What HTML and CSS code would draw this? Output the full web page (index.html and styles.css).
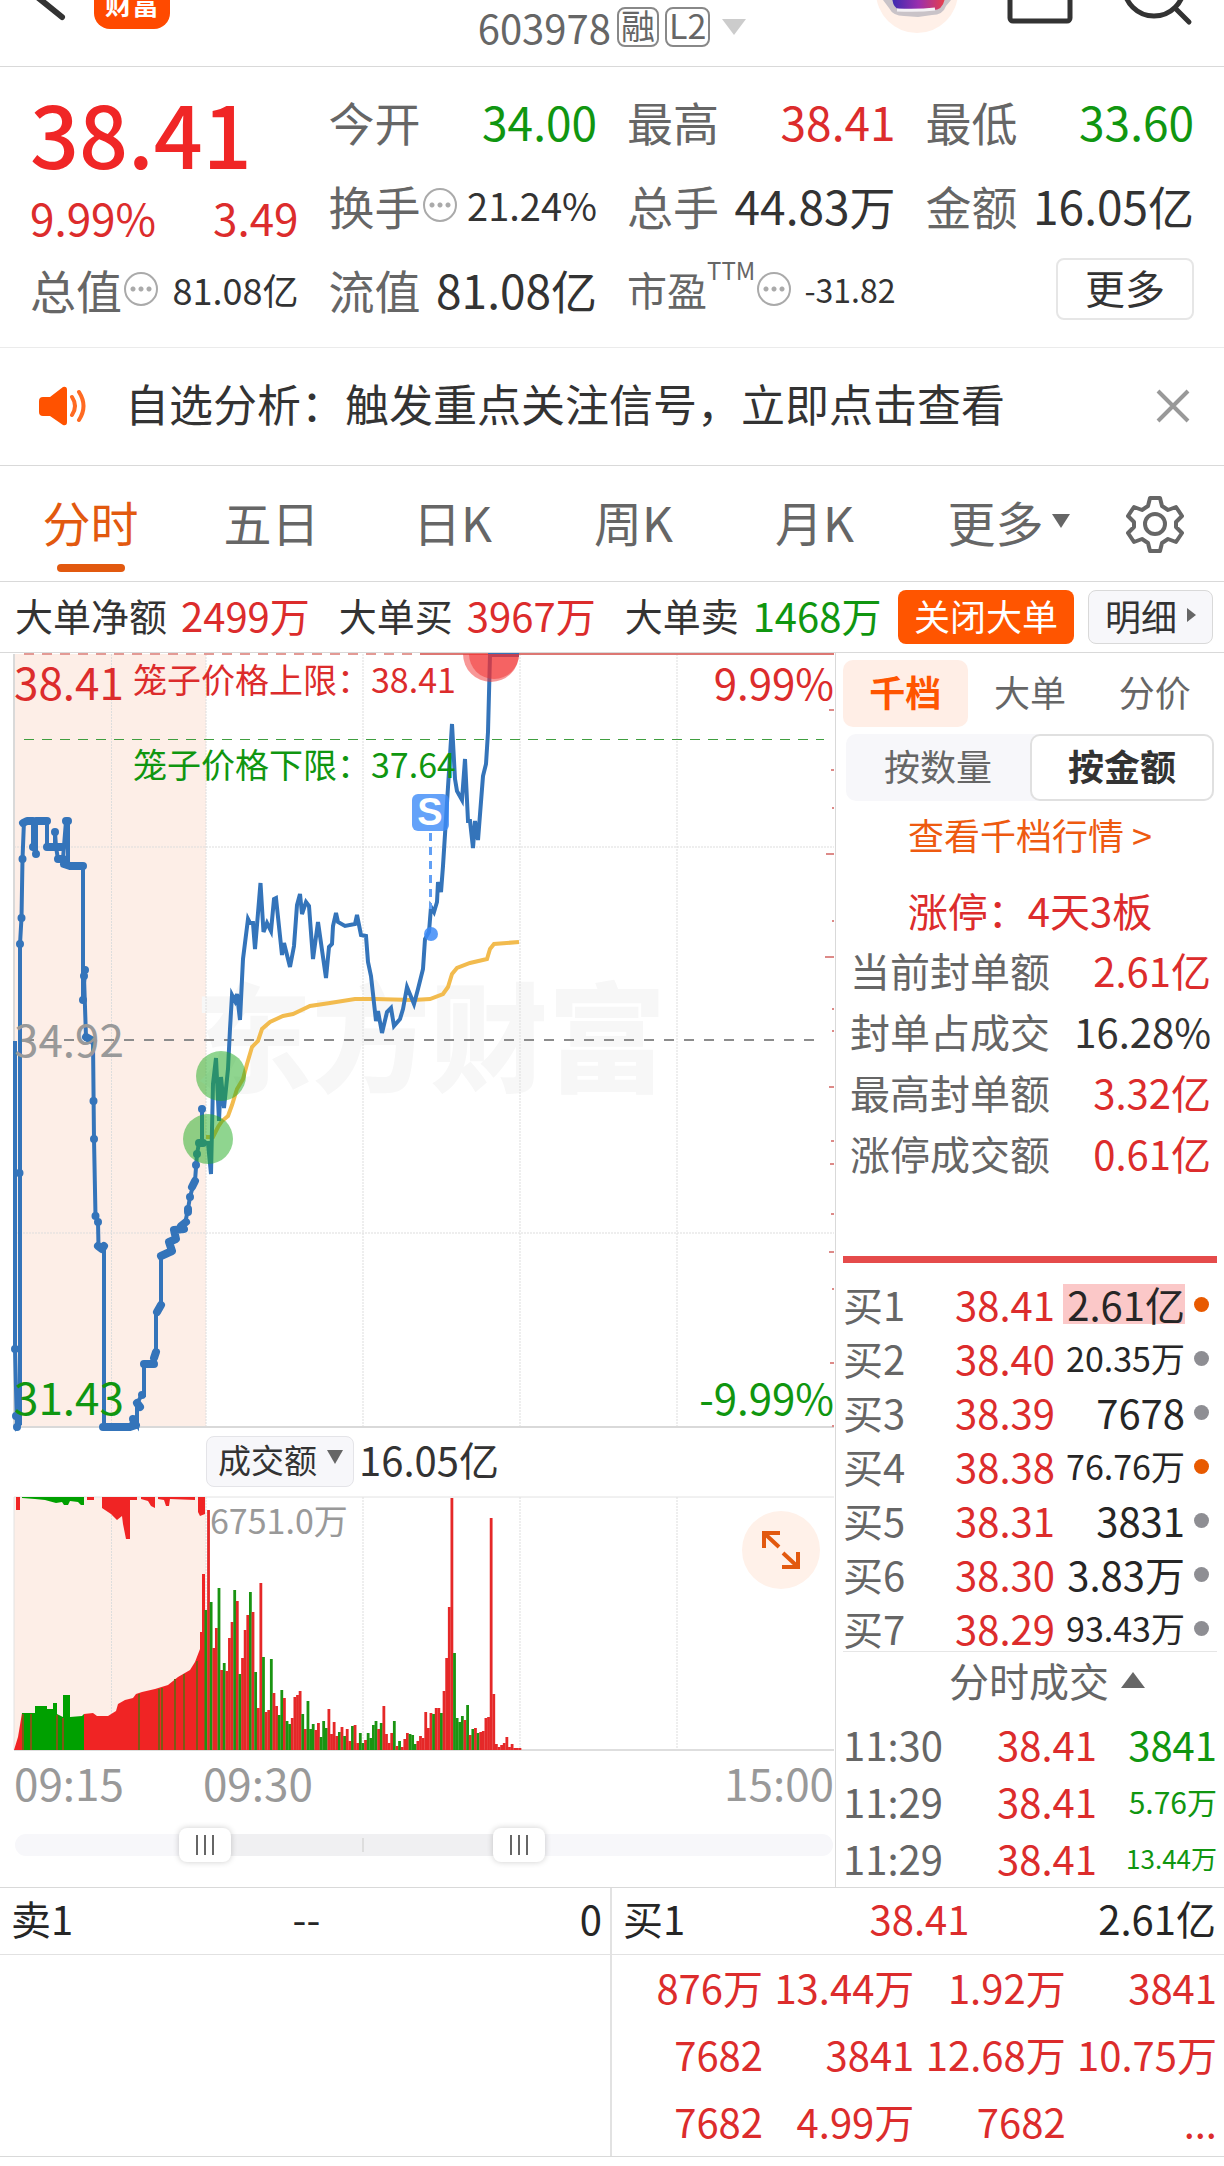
FILE: index.html
```html
<!DOCTYPE html>
<html lang="zh-CN">

<head>
    <meta charset="UTF-8">
    <meta name="viewport" content="width=device-width, initial-scale=1.0">
    <title>603978 分时</title>
    <link rel="stylesheet" href="styles.css">
</head>

<body>
    <header class="top-bar">
        <div class="top-left">
            <button class="icon-button" aria-label="返回">
                <svg width="74" height="67" viewBox="0 0 74 67"><path d="M36 -4L62 17" fill="none" stroke="#333" stroke-width="6" stroke-linecap="round"/></svg>
            </button>
            <span class="brand">财富</span>
        </div>
        <div class="stock-code">
            <span>603978</span>
            <span class="tag">融</span>
            <span class="tag">L2</span>
            <span class="caret-down caret-light"></span>
        </div>
        <div class="top-right">
            <button class="icon-button" aria-label="智能助手">
                <svg width="90" height="67" viewBox="0 0 90 67">
                    <defs>
                        <linearGradient id="screen" x1="0" x2="1"><stop offset="0" stop-color="#3a2bb0"/><stop offset=".5" stop-color="#9a2fae"/><stop offset="1" stop-color="#e8404a"/></linearGradient>
                    </defs>
                    <circle cx="44" cy="-8" r="41" fill="#fff0e8"/>
                    <path d="M10 0h68l-5 6q-3 9-14 9l-14 2-14-1q-11 0-15-8z" fill="#c9c3c8"/>
                    <path d="M19 -6h53q0 16-12 16l-34-1q-7-1-7-15z" fill="url(#screen)"/>
                    <path d="M24 10q22 1 38-1" fill="none" stroke="#f4f1f4" stroke-width="3"/>
                </svg>
            </button>
            <button class="icon-button" aria-label="分享">
                <svg width="90" height="67" viewBox="0 0 90 67"><rect x="17" y="-30" width="60" height="51" rx="3" fill="none" stroke="#333" stroke-width="5"/></svg>
            </button>
            <button class="icon-button" aria-label="搜索">
                <svg width="111" height="67" viewBox="0 0 111 67"><circle cx="41" cy="-14" r="30" fill="none" stroke="#333" stroke-width="5"/><path d="M62 8L76 22" stroke="#333" stroke-width="5" stroke-linecap="round"/></svg>
            </button>
        </div>
    </header>

    <section class="stats">
        <div class="quote">
            <div class="quote-price">38.41</div>
            <div class="quote-change"><span>9.99%</span><span>3.49</span></div>
        </div>
        <div class="stat"><span class="label">今开</span><span class="value green">34.00</span></div>
        <div class="stat"><span class="label">最高</span><span class="value red">38.41</span></div>
        <div class="stat"><span class="label">最低</span><span class="value green">33.60</span></div>
        <div class="stat"><span class="label">换手</span><i class="hint"></i><span class="value medium">21.24%</span></div>
        <div class="stat"><span class="label">总手</span><span class="value">44.83万</span></div>
        <div class="stat"><span class="label">金额</span><span class="value">16.05亿</span></div>
        <div class="stat"><span class="label">总值</span><i class="hint"></i><span class="value small">81.08亿</span></div>
        <div class="stat"><span class="label">流值</span><span class="value">81.08亿</span></div>
        <div class="stat"><span class="label compact">市盈<sup>TTM</sup></span><i class="hint"></i><span class="value tiny">-31.82</span></div>
        <div class="stat"><button class="more-button">更多</button></div>
    </section>

    <section class="notice">
        <svg width="50" height="40" viewBox="0 0 50 40">
            <path d="M4 11h7L24 1q4-1 4 3v32q0 4-4 3L11 30H4q-4 0-4-4V15q0-4 4-4z" fill="#ff5200"/>
            <path d="M33 11q6 9 0 18M40 6q9 14 0 28" fill="none" stroke="#ff6a22" stroke-width="4" stroke-linecap="round"/>
        </svg>
        <p>自选分析：触发重点关注信号，立即点击查看</p>
        <button class="icon-button" aria-label="关闭">
            <svg width="34" height="34" viewBox="0 0 34 34"><path d="M2 2L32 32M32 2L2 32" stroke="#999" stroke-width="4"/></svg>
        </button>
    </section>

    <nav class="tabs">
        <a href="#" class="active">分时</a>
        <a href="#">五日</a>
        <a href="#">日K</a>
        <a href="#">周K</a>
        <a href="#">月K</a>
        <a href="#">更多<span class="caret-down caret-small"></span></a>
        <button class="icon-button" aria-label="设置">
            <svg width="58" height="58" viewBox="0 0 58 58" fill="none" stroke="#666" stroke-width="4" stroke-linejoin="round">
                <path d="M24 3h10l2 8 6 4 8-3 6 9-6 6v5l6 6-6 9-8-3-6 4-2 8H24l-2-8-6-4-8 3-6-9 6-6v-5l-6-6 6-9 8 3 6-4z"/>
                <circle cx="29" cy="29" r="10"/>
            </svg>
        </button>
    </nav>

    <section class="big-orders">
        <span class="order-item">大单净额<b class="red">2499万</b></span>
        <span class="order-item">大单买<b class="red">3967万</b></span>
        <span class="order-item">大单卖<b class="green">1468万</b></span>
        <button class="close-orders">关闭大单</button>
        <button class="detail-button">明细<span class="caret-right"></span></button>
    </section>

    <main class="board">
        <div class="charts">
            <svg class="chart" viewBox="0 654 835 783">
                <rect x="14" y="655" width="192" height="773" fill="#fdeee7"/>
                <text x="194" y="1084" class="watermark">东方财富</text>
                <g class="grid">
                    <path d="M111.5 655V1428M206 655V1428M363 655V1428M520 655V1428M677 655V1428M14 848H834M14 1234H834"/>
                </g>
                <path d="M14 655V1428M14 1428H834" stroke="#d9d9d9" stroke-width="2"/>
                <path d="M24 655H834" stroke="#e39a95" stroke-width="2" stroke-dasharray="10 8"/>
                <path d="M420 655H834" stroke="#dd7773" stroke-width="2"/>
                <path d="M24 740.5H824" stroke="#3f9e3f" stroke-width="1" stroke-dasharray="10 8"/>
                <path d="M24 1041H824" stroke="#8c8c8c" stroke-width="2" stroke-dasharray="10 10"/>
                <path d="M829 711h5M831 771h3M832 809h2M826 855h8M832 922h2M825 958h9M832 1010h2M832 1032h2M829 1088h5M831 1142h3M830 1165h4M831 1215h3M829 1253h5M832 1290h2M830 1364h4M832 1427h2" stroke="#dd8a88" stroke-width="2"/>
                <path class="average" d="M206 1138L213 1138 218 1128 222 1122 228 1117 232 1106 237 1090 243 1080 247 1065 252 1048 258 1042 262 1030 270 1023 283 1017 293 1015 310 1007 330 1004 355 1000 375 1000 413 1001 430 1000 443 995 448 988 452 975 457 969 470 964 487 960 490 950 494 945 519 943"/>
                <path class="price" d="M15 1042V1350L17 1428 20 1425V945L21.500 919 22.500 860 24 822H33V848L36 855V822H47V848H55V833L56 848 58 860H63L66 822H68V866H83V1002L85 971 84 978 86 1038 93 1042 94 1140 95.500 1217 98 1223 98.500 1247H104V1428H130L133 1420 137 1426V1404L142 1396H144V1365H154L156 1353V1312L161 1306V1257L172 1250 169 1243 175 1241 174 1231 184 1230 188 1210 190 1198 193 1187 195 1182 197 1155 199 1144H202V1110V1144H208L211 1175 213 1085 216 1059 219 1122 221 1078 224 1109 228 1070 230 1030 232 996 235 1002 237 995 240 1021 243 960 248 920 250 924H253L255 950 260.500 884 263.500 933 267 924 271 932 274 900 276 899 282 956 284 944 290 968 294 947 297 906 300 895 302 915 306 903 309 907 313 960 318 923 326 979 329 948 332 945 333 927 336 914 338 923 345 927 355 925 357 916 361 936 366 937 368 963 371 977 376 1022 378 1012 382 1034 387 1013 391 1009 394 1027 400 1020 403 1010 407 988 414 1005 418 990 423 970 425 940 429 933 431 908 434 913 437 903 438 883 441 893 443 867 452 725 455 780 457 792 462 801 465 760 468 822H470L473 849 475 822 478 841 483 777 486 765 488 733 490 656H519"/>
                <!-- call auction ticks -->
                <path class="ticks" d="M15 1350V1350M16 1417V1417M17 1428V1428M19.500 1174V1174M20 945V945M21.500 919V919M22.500 860V860M23 824L27 822H33M33 848V848M36 855V855M36 822H47M47 848H62M55 833V833M58 860H63M66 822H68M64 865L70 867H83M85 971V971M84 977V977M83 1001V1001M86 1038L93 1042M93.500 1102V1102M94 1140V1140M95.500 1217V1217M98 1223V1223M98 1247L102 1250 104 1247M103 1428H130L136 1426M133 1420V1420M137 1404L140 1408M142 1396V1396M144 1365H154M154 1359L156 1353M157 1313L161 1306M161 1257L172 1252 169 1243 176 1240 174 1231 184 1230 181 1227 186 1223M188 1213V1210M190 1198V1198M192 1188L195 1182M196 1166V1166M197 1155V1155M199 1144H203M202 1110V1110"/>
                <circle cx="221" cy="1077" r="25" fill="#1fac1f" fill-opacity=".5"/>
                <circle cx="208" cy="1140" r="25" fill="#1fac1f" fill-opacity=".5"/>
                <path d="M463 655a28 28 0 0 0 56 0z" fill="#f23030" fill-opacity=".5"/>
                <path d="M469 655a25 25 0 0 0 50 0z" fill="#f23030" fill-opacity=".5"/>
                <path d="M430.500 834V910" stroke="#62a0f5" stroke-width="3" stroke-dasharray="8 6"/>
                <circle cx="431" cy="935" r="7" fill="#3d8bf7" fill-opacity=".85"/>
                <rect x="412" y="795" width="37" height="37" rx="6" fill="#3d8bf7" fill-opacity=".8"/>
                <text x="430" y="826" class="badge-text" text-anchor="middle">S</text>
                <g class="price-label">
                    <text x="14" y="701" class="fill-red">38.41</text>
                    <text x="14" y="1058" class="fill-gray">34.92</text>
                    <text x="14" y="1416" class="fill-green">31.43</text>
                </g>
                <g class="percent-label">
                    <text x="834" y="701" class="fill-red" text-anchor="end">9.99%</text>
                    <text x="834" y="1416" class="fill-green" text-anchor="end">-9.99%</text>
                </g>
                <g class="limit-label">
                    <text x="133" y="694" class="fill-red">笼子价格上限：38.41</text>
                    <text x="133" y="779" class="fill-green">笼子价格下限：37.64</text>
                </g>
            </svg>

            <div class="volume-bar">
                <button class="volume-select">成交额<span class="caret-down caret-dark"></span></button>
                <span>16.05亿</span>
            </div>

            <div class="volume">
                <svg class="chart" viewBox="0 1488 835 268">
                    <rect x="14" y="1498" width="192" height="253" fill="#fdeee7"/>
                    <g class="grid"><path d="M111.500 1498V1751M206 1498V1751M363 1498V1751M520 1498V1751M677 1498V1751"/></g>
                    <path d="M14 1498V1751M14 1498H834" stroke="#e2e2e2"/>
                    <path d="M14 1751H834" stroke="#dedede" stroke-width="2"/>
                    <path fill="#f02424" d="M14 1751L18 1738 22 1714V1751zM84 1751V1715L93 1714 97 1717H108L116 1712 118 1705 125 1701 133 1699 136 1695 142 1693 155 1690 168 1686 178 1678 190 1671 195 1663 200 1650V1633H202V1575H205V1751z"/>
                    <path fill="#00a000" d="M22 1751V1714H35V1707H47V1710H53V1704H57V1715L63 1718V1696H70V1718L82 1717 84 1715V1751z"/>
                    <path fill="#f02424" d="M16 1498H20V1511H16zM87 1498H94V1501H87zM102 1498H130V1540H126L123 1525 122 1517 117 1521 111 1515 102 1509zM130 1498H137V1501H130zM141 1498H155V1509L151 1507 148 1502 141 1500zM158 1498H195V1501L170 1500 169 1507H166L164 1501 158 1500zM198 1498H205V1515L200 1517 198 1513z"/>
                    <path fill="#00a000" d="M22 1498H84V1506H81L78 1503 70 1502 68 1506H64L62 1503 56 1504 45 1501 35 1500 22 1499z"/>
                    <path stroke="#7d5a14" stroke-width="2" d="M23 1751V1715M31 1751V1715M57 1751V1716M63 1751V1719M139 1751V1695M159 1751V1690M162 1751V1689M175 1751V1680M184 1751V1675M197 1751V1662"/>
                    <g id="bars"></g>
                    <text x="210" y="1535" class="limit-label fill-gray">6751.0万</text>
                </svg>
                <button class="expand" aria-label="展开">
                    <svg width="40" height="40" viewBox="0 0 40 40" fill="none" stroke="#e2590f" stroke-width="4"><path d="M3 18V3H19M3 3L18 17M37 22V37H21M37 37L22 23"/></svg>
                </button>
            </div>

            <div class="time-axis"><span>09:15</span><span class="open-time">09:30</span><span>15:00</span></div>

            <div class="range">
                <span class="range-active"></span>
                <input type="range" min="0" max="1000" value="214" aria-label="开始时间">
                <input type="range" min="0" max="1000" value="624" aria-label="结束时间">
            </div>
        </div>

        <aside class="panel">
            <div class="panel-tabs">
                <button class="active">千档</button>
                <button>大单</button>
                <button>分价</button>
            </div>
            <div class="segment">
                <button>按数量</button>
                <button class="active">按金额</button>
            </div>
            <a href="#" class="depth-link">查看千档行情 &gt;</a>

            <p class="limit-title">涨停：4天3板</p>
            <dl class="limit-info">
                <div><dt>当前封单额</dt><dd class="red">2.61亿</dd></div>
                <div><dt>封单占成交</dt><dd>16.28%</dd></div>
                <div><dt>最高封单额</dt><dd class="red">3.32亿</dd></div>
                <div><dt>涨停成交额</dt><dd class="red">0.61亿</dd></div>
            </dl>

            <table class="bids">
                <tr><th>买1</th><td class="red">38.41</td><td><span class="highlight">2.61亿</span></td><td><i class="dot hot"></i></td></tr>
                <tr><th>买2</th><td class="red">38.40</td><td class="long">20.35万</td><td><i class="dot"></i></td></tr>
                <tr><th>买3</th><td class="red">38.39</td><td>7678</td><td><i class="dot"></i></td></tr>
                <tr><th>买4</th><td class="red">38.38</td><td class="long">76.76万</td><td><i class="dot hot"></i></td></tr>
                <tr><th>买5</th><td class="red">38.31</td><td>3831</td><td><i class="dot"></i></td></tr>
                <tr><th>买6</th><td class="red">38.30</td><td>3.83万</td><td><i class="dot"></i></td></tr>
                <tr><th>买7</th><td class="red">38.29</td><td class="long">93.43万</td><td><i class="dot"></i></td></tr>
            </table>

            <button class="deals-toggle">分时成交<span class="caret-up"></span></button>
            <table class="deals">
                <tr><th>11:30</th><td class="red">38.41</td><td class="green">3841</td></tr>
                <tr><th>11:29</th><td class="red">38.41</td><td class="green mid">5.76万</td></tr>
                <tr><th>11:29</th><td class="red">38.41</td><td class="green low">13.44万</td></tr>
            </table>
        </aside>
    </main>

    <section class="queues">
        <div class="queue">
            <div class="queue-head"><span>卖1</span><span>--</span><span>0</span></div>
        </div>
        <div class="queue">
            <div class="queue-head"><span>买1</span><span class="red">38.41</span><span>2.61亿</span></div>
            <table class="queue-orders">
                <tr><td>876万</td><td>13.44万</td><td>1.92万</td><td>3841</td></tr>
                <tr><td>7682</td><td>3841</td><td>12.68万</td><td>10.75万</td></tr>
                <tr><td>7682</td><td>4.99万</td><td>7682</td><td>...</td></tr>
            </table>
        </div>
    </section>

    <script>
        // Minute turnover from 09:30: r = up, g = down, number = bar height
        const turnover = 'g140 r240 g148 r102 r122 g162 r80 g87 r79 r112 r128 g160 r149 g76 r92 r120 r135 g158 r138 g78 r42 r167 g93 r38 r40 g91 r57 r44 g35 g60 r52 g29 g26 r32 r53 r55 r59 g36 r21 g49 g21 g26 r20 r27 g13 g29 g22 r41 r16 r28 r14 g18 r23 g14 r21 r9 g24 r25 r7 g17 g7 r10 g17 g12 g25 g29 r21 g27 r44 r16 r7 r17 g29 r4 g9 r3 r11 r17 g16 g15 g6 r9 r14 r12 r38 r22 r37 g36 r42 r42 g37 r59 r92 r143 r252 g97 g32 g28 g34 r30 g45 r15 g21 r22 g17 r18 r19 r32 r33 r232 r56 r6 r3 r5 r7 r13 r3 r6 r2 r2 r2';
        const bars = document.getElementById('bars');

        turnover.split(' ').forEach((item, i) => {
            const bar = document.createElementNS('http://www.w3.org/2000/svg', 'rect');
            const height = Number(item.slice(1));
            bar.setAttribute('x', 204.5 + i * 2.617);
            bar.setAttribute('y', 1751 - height);
            bar.setAttribute('width', 2.8);
            bar.setAttribute('height', height);
            bar.setAttribute('class', item[0] === 'r' ? 'bar-up' : 'bar-down');
            bars.appendChild(bar);
        });
    </script>
</body>

</html>
```
FILE: styles.css
```css
:root {
    --red: #dc2c2c;
    --green: #109610;
    --orange: #ff5500;
    --text: #333;
    --muted: #666;
    --line: #d9d9d9;
    --soft: #f7f7fa;
}

* {
    margin: 0;
    padding: 0;
    box-sizing: border-box;
}

body {
    background-color: #fff;
    color: var(--text);
    font-family: "Noto Sans CJK SC", sans-serif;
    font-size: 40px;
    line-height: 1;
}

button {
    padding-bottom: 5px;
    border: none;
    background: none;
    color: inherit;
    font: inherit;
    cursor: pointer;
}

.icon-button {
    padding: 0;
}

a {
    color: inherit;
    text-decoration: none;
}

b,
th,
i {
    font-weight: normal;
    font-style: normal;
}

table {
    width: 100%;
    border-collapse: collapse;
    table-layout: fixed;
}

svg {
    display: block;
}

.red {
    color: var(--red);
}

.green {
    color: var(--green);
}

/* triangles */
.caret-down,
.caret-up,
.caret-right {
    display: inline-block;
    border: 12px solid transparent;
}

.caret-down {
    border-top: 16px solid var(--muted);
    border-bottom: none;
}

.caret-up {
    border-bottom: 16px solid var(--muted);
    border-top: none;
    margin-left: 12px;
}

.caret-light {
    border-top-color: #ccc;
    margin-left: 6px;
}

.caret-small {
    border-width: 14px 9px 0;
    margin-left: 8px;
}

.caret-dark {
    border-width: 14px 8px 0;
}

.caret-right {
    border-width: 7px 0 7px 9px;
    border-left-color: var(--muted);
}

/* header */
.top-bar {
    display: grid;
    grid-template-columns: 1fr auto 1fr;
    height: 67px;
    overflow: hidden;
    border-bottom: 1px solid var(--line);
}

.top-left,
.top-right {
    display: flex;
    align-items: flex-start;
}

.top-left {
    gap: 20px;
}

.top-right {
    justify-content: flex-end;
}

.top-right .icon-button {
    flex: none;
    margin-left: 30px;
}

.top-right .icon-button:first-child {
    margin-left: 0;
}

.brand {
    width: 76px;
    height: 76px;
    margin-top: -47px;
    padding-top: 37px;
    border-radius: 16px;
    background-color: #ff4a00;
    color: #fff;
    font-size: 27px;
    font-weight: bold;
    text-align: center;
}

.stock-code {
    display: flex;
    align-items: center;
    gap: 6px;
    height: 58px;
    padding-bottom: 4px;
    color: var(--muted);
}

.tag {
    height: 40px;
    padding: 0 2px;
    border: 2px solid #888;
    border-radius: 8px;
    font-size: 34px;
    line-height: 32px;
}

/* key figures */
.stats {
    display: grid;
    grid-template-columns: repeat(4, 1fr);
    grid-auto-rows: 84px;
    column-gap: 30px;
    padding: 12px 30px 16px;
    border-bottom: 1px solid #ebebeb;
}

.quote {
    grid-row: span 2;
    padding-top: 9px;
    color: var(--red);
}

.quote-price {
    color: #f02626;
    font-size: 86px;
    font-weight: 500;
    line-height: 88px;
}

.quote-change {
    display: flex;
    justify-content: space-between;
    margin-top: 11px;
    font-size: 44px;
    line-height: 60px;
}

.stat {
    display: flex;
    align-items: center;
    font-size: 46px;
    white-space: nowrap;
}

.stat .label {
    color: var(--muted);
}

.stat .value {
    margin-left: auto;
}

.stat .medium {
    font-size: 38px;
}

.stat .small {
    font-size: 36px;
}

.stat .tiny {
    font-size: 32px;
}

.stat .compact {
    font-size: 40px;
}

sup {
    font-size: 24px;
    vertical-align: 26px;
    line-height: 0;
}

.hint {
    width: 34px;
    height: 34px;
    margin-left: 2px;
    border: 2px solid #aaa;
    border-radius: 50%;
    background: radial-gradient(circle, #aaa 2px, transparent 3px) center / 8px 8px no-repeat,
        radial-gradient(circle, #aaa 2px, transparent 3px) 3px 11px / 8px 8px no-repeat,
        radial-gradient(circle, #aaa 2px, transparent 3px) 19px 11px / 8px 8px no-repeat;
}

.more-button {
    width: 138px;
    height: 62px;
    margin-left: auto;
    border: 2px solid #e6e6e6;
    border-radius: 8px;
    font-size: 40px;
}

/* notice */
.notice {
    display: flex;
    align-items: center;
    height: 118px;
    padding: 0 34px 2px 39px;
    border-bottom: 1px solid var(--line);
}

.notice p {
    flex: 1;
    padding: 0 0 6px 36px;
    font-size: 44px;
}

/* period tabs */
.tabs {
    display: grid;
    grid-template-columns: repeat(6, 181fr) 138fr;
    height: 116px;
    border-bottom: 1px solid var(--line);
    color: var(--muted);
    font-size: 48px;
}

.tabs a {
    display: flex;
    align-items: center;
    justify-content: center;
    padding-bottom: 6px;
    white-space: nowrap;
}

.tabs a:nth-child(6) {
    padding-left: 26px;
}

.tabs .active {
    position: relative;
    color: #e2590f;
}

.tabs .active::after {
    content: "";
    position: absolute;
    bottom: 9px;
    width: 68px;
    height: 8px;
    border-radius: 4px;
    background-color: #e2590f;
}

.tabs .icon-button {
    display: flex;
    align-items: center;
    justify-content: center;
}

/* large orders */
.big-orders {
    display: flex;
    align-items: center;
    height: 71px;
    padding: 0 11px 0 15px;
    border-bottom: 1px solid var(--line);
    font-size: 38px;
    white-space: nowrap;
}

.order-item {
    display: flex;
    align-items: center;
    gap: 14px;
    margin-right: 29px;
    padding-bottom: 4px;
}

.order-item b {
    font-size: 40px;
}

.close-orders,
.detail-button {
    height: 54px;
    border-radius: 8px;
    font-size: 36px;
}

.close-orders {
    width: 176px;
    margin: 0 14px 0 auto;
    background-color: var(--orange);
    color: #fff;
}

.order-item:nth-child(3) {
    margin-right: 0;
}

.detail-button {
    display: flex;
    align-items: center;
    justify-content: center;
    gap: 10px;
    width: 125px;
    border: 1px solid var(--line);
    background-color: var(--soft);
}

/* board */
.board {
    display: grid;
    grid-template-columns: 836fr 388fr;
}

.charts {
    border-right: 1px solid var(--line);
}

.chart {
    width: 100%;
    height: auto;
}

.grid path {
    fill: none;
    stroke: #ddd;
    stroke-width: 1;
    stroke-dasharray: 2 1;
}

.price,
.ticks,
.average {
    fill: none;
    stroke: #3474ba;
    stroke-width: 4;
}

.ticks {
    stroke-width: 8;
    stroke-linecap: round;
    stroke-linejoin: round;
}

.average {
    stroke: #f2bb4e;
}

.bar-up {
    fill: #e52828;
}

.bar-down {
    fill: #1a9412;
}

.watermark {
    fill: #f7f7f7;
    font-size: 118px;
    font-weight: 900;
}

.badge-text {
    fill: #fff;
    font-family: "Liberation Sans", sans-serif;
    font-size: 38px;
    font-weight: bold;
}

.price-label {
    font-size: 44px;
}

.percent-label {
    font-size: 42px;
}

.limit-label {
    font-size: 34px;
}

.fill-red {
    fill: var(--red);
}

.fill-green {
    fill: var(--green);
}

.fill-gray {
    fill: #999;
}

.volume-bar {
    display: flex;
    align-items: center;
    gap: 5px;
    padding-left: 206px;
}

.volume-bar span:last-child {
    padding-bottom: 5px;
}

.volume-select {
    display: flex;
    align-items: center;
    justify-content: space-between;
    width: 148px;
    height: 51px;
    padding: 0 10px 5px 11px;
    border: 1px solid #e4e4e8;
    border-radius: 8px;
    background-color: var(--soft);
    font-size: 33px;
}

.volume {
    position: relative;
}

.expand {
    position: absolute;
    top: 24px;
    right: 15px;
    display: flex;
    align-items: center;
    justify-content: center;
    width: 78px;
    height: 78px;
    padding: 0;
    border-radius: 50%;
    background-color: #fff1e9;
}

.time-axis {
    display: flex;
    align-items: center;
    height: 60px;
    padding: 0 1px 6px 14px;
    color: #999;
    font-size: 44px;
}

.time-axis span:last-child {
    margin-left: auto;
}

.open-time {
    margin-left: 79px;
}

.range {
    position: relative;
    height: 22px;
    margin: 19px 2px 31px 15px;
    border-radius: 11px;
    background-color: var(--soft);
}

.range-active {
    position: absolute;
    left: 23%;
    right: 38%;
    height: 22px;
    background: linear-gradient(#ddd, #ddd) 50% 50% / 2px 14px no-repeat #f0f0f2;
}

.range input {
    position: absolute;
    top: -6px;
    left: 0;
    width: 100%;
    height: 34px;
    appearance: none;
    background: none;
    pointer-events: none;
}

.range input::-webkit-slider-thumb {
    appearance: none;
    width: 52px;
    height: 34px;
    border-radius: 8px;
    background: repeating-linear-gradient(90deg, #666 0 2px, transparent 2px 8px) 50% 50% / 18px 20px no-repeat #fff;
    box-shadow: 0 0 6px rgba(0, 0, 0, 0.2);
    pointer-events: auto;
}

/* right panel */
.panel {
    padding: 7px 7px 0;
}

.panel-tabs {
    display: grid;
    grid-template-columns: repeat(3, 1fr);
    height: 67px;
    color: var(--muted);
    font-size: 36px;
}

.panel-tabs .active {
    border-radius: 10px;
    background-color: #ffeee6;
    color: var(--orange);
    font-weight: bold;
}

.segment {
    display: grid;
    grid-template-columns: 1fr 1fr;
    height: 67px;
    margin: 7px 3px 0;
    border-radius: 10px;
    background-color: var(--soft);
    color: var(--muted);
    font-size: 36px;
}

.segment .active {
    border: 2px solid #e0e0e0;
    border-radius: 10px;
    background-color: #fff;
    color: var(--text);
    font-weight: bold;
}

.depth-link {
    display: block;
    color: #ee5a10;
    font-size: 36px;
    line-height: 67px;
    text-align: center;
}

.limit-title {
    margin-top: 12px;
    color: var(--red);
    line-height: 60px;
    text-align: center;
}

.limit-info {
    height: 323px;
    padding: 0 6px 0 7px;
    border-bottom: 7px solid #e54b4b;
}

.limit-info div {
    display: flex;
    justify-content: space-between;
    line-height: 61px;
}

.limit-info dt {
    color: var(--muted);
}

.bids {
    margin-top: 10px;
    color: #262626;
}

.bids tr {
    height: 54px;
}

.bids th,
.bids td {
    padding-top: 8px;
}

.bids th,
.deals th {
    width: 100px;
    color: var(--muted);
    text-align: left;
}

.bids td {
    text-align: right;
}

.bids td:nth-child(2) {
    width: 112px;
}

.bids td:last-child {
    width: 32px;
}

.bids .long {
    font-size: 34px;
}

.highlight {
    display: inline-block;
    padding-left: 4px;
    background-color: #fbc8c8;
}

.dot {
    display: block;
    width: 15px;
    height: 15px;
    margin-left: 9px;
    border-radius: 50%;
    background-color: #8e8e93;
}

.hot {
    background-color: #e85a00;
}

.deals-toggle {
    display: flex;
    align-items: center;
    justify-content: center;
    width: 100%;
    height: 64px;
    padding: 0 0 8px 34px;
    border-top: 1px solid #e6e6e6;
    color: var(--muted);
}

.deals tr {
    height: 57px;
}

.deals th {
    width: 104px;
}

.deals td {
    text-align: right;
}

.deals td:nth-child(2) {
    width: 150px;
}

.deals .mid {
    font-size: 30px;
}

.deals .low {
    font-size: 26px;
}

/* order queues */
.queues {
    display: grid;
    grid-template-columns: 1fr 1fr;
    border-top: 1px solid var(--line);
    border-bottom: 1px solid var(--line);
    color: #262626;
}

.queue:first-child {
    border-right: 2px solid #e2e2e2;
}

.queue-head {
    display: grid;
    grid-template-columns: 1fr 1fr 1fr;
    align-items: center;
    height: 67px;
    padding: 0 8px 6px 11px;
    border-bottom: 1px solid #e2e2e2;
}

.queue-head span:nth-child(2) {
    text-align: center;
}

.queue-head span:last-child {
    text-align: right;
}

.queue-orders {
    color: var(--red);
}

.queue-orders tr {
    height: 67px;
}

.queue-orders td {
    padding: 0 7px 4px 0;
    text-align: right;
    white-space: nowrap;
}

.queue-orders td:first-child {
    width: 158px;
}
```
